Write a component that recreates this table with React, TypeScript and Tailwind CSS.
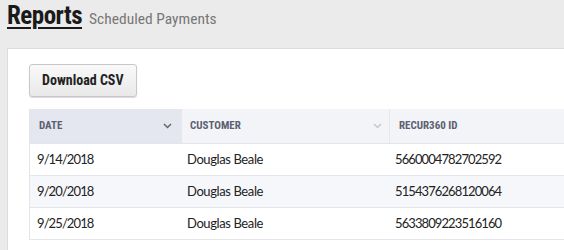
const cond = { fontFamily: '"Roboto Condensed", "Liberation Sans Narrow", "DejaVu Sans Condensed", Roboto, sans-serif' };

const rows = [
  { date: "9/14/2018", customer: "Douglas Beale", id: "5660004782702592" },
  { date: "9/20/2018", customer: "Douglas Beale", id: "5154376268120064" },
  { date: "9/25/2018", customer: "Douglas Beale", id: "5633809223516160" },
];

const Chevron = () => (
  <svg width="9" height="6" viewBox="0 0 9 6" fill="none" stroke="currentColor" strokeWidth="1.5">
    <path d="M1 1l3.5 3.5L8 1" />
  </svg>
);

const App = () => (
  <div className="w-[564px] h-[250px] overflow-hidden bg-[#ebebeb] font-['Lato',sans-serif]">
    <div className="flex items-baseline gap-[7px] pl-[7px] h-[48px]">
      <h1
        className="text-[25px] leading-[31px] font-bold text-[#1a1a1a] underline decoration-2 underline-offset-[3px] tracking-[-0.5px]"
        style={cond}
      >
        Reports
      </h1>
      <span className="text-[15.5px] text-[#777]" style={cond}>
        Scheduled Payments
      </span>
    </div>
    <div className="ml-[7px] bg-white border-t border-l border-[#dcdcdc] pt-[15px] pl-[21px] h-[220px]">
      <button
        className="h-[33px] px-[12px] rounded-[3px] border border-[#c8c8c8] bg-gradient-to-b from-[#f9f9f9] to-[#e9e9e9] shadow-[0_1px_1px_rgba(0,0,0,0.15)] text-[14px] font-bold text-[#222]"
        style={cond}
      >
        Download CSV
      </button>
      <div className="mt-[12px] border-l border-b border-[#e3e5eb]">
        <div className="flex h-[34px] text-[11px] font-bold uppercase text-[#5b6070]" style={cond}>
          <div className="w-[151px] bg-[#e4e7ef] flex items-center justify-between pl-[9px] pr-[9px]">
            <span>Date</span>
            <span className="text-[#666]"><Chevron /></span>
          </div>
          <div className="w-[208px] bg-[#f3f4f8] border-l border-[#e6e8ee] flex items-center justify-between pl-[8px] pr-[7px]">
            <span>Customer</span>
            <span className="text-[#c4c7cf]"><Chevron /></span>
          </div>
          <div className="flex-1 bg-[#f3f4f8] border-l border-[#e6e8ee] flex items-center pl-[9px]">
            <span>Recur360 ID</span>
          </div>
        </div>
        {rows.map((r, i) => (
          <div
            key={r.id}
            className={`flex h-[32px] items-center border-t border-[#e3e5eb] text-[13px] text-[#222] ${i === 1 ? "bg-[#f6f7fa]" : "bg-white"}`}
          >
            <div className="w-[151px] pl-[7px] tracking-[-0.9px]">{r.date}</div>
            <div className="w-[208px] pl-[6px] tracking-[-0.4px]">{r.customer}</div>
            <div className="flex-1 pl-[6px] tracking-[-0.9px]">{r.id}</div>
          </div>
        ))}
      </div>
    </div>
  </div>
);

export default App;
